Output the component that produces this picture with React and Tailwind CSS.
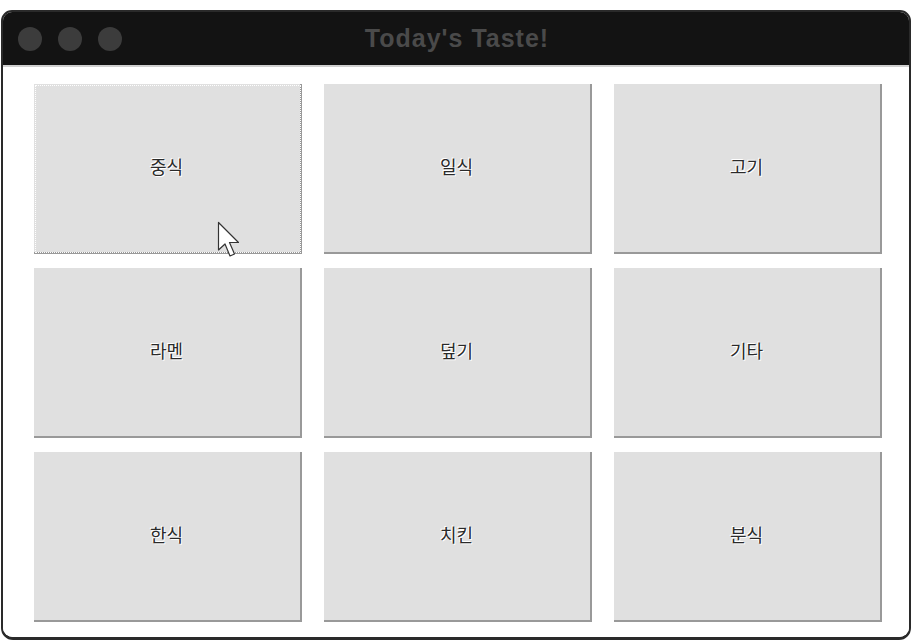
import React from "react"

const foods = ["중식", "일식", "고기", "라멘", "덮기", "기타", "한식", "치킨", "분식"]

function Cursor() {
  return (
    <svg className="absolute left-[183px] top-[137px] z-10" width="26" height="40" viewBox="0 0 26 40">
      <path d="M1.5 1.5 L1.5 29 L8 23 L13 35 L17.5 33 L12.5 21.5 L21.5 21.5 Z" fill="#fff" stroke="#333" strokeWidth="1.2" strokeLinejoin="round" />
    </svg>
  )
}

export default function App() {
  return (
    <div className="w-[912px] h-[640px] bg-white flex flex-col pt-[10px] font-['Liberation_Sans',sans-serif]">
      <div className="flex-1 mx-[1px] flex flex-col rounded-t-[11px] rounded-b-[12px] overflow-hidden border-2 border-[#2a2a2a] border-b-[3px]">
        {/* title bar */}
        <div className="relative h-[55px] bg-[#131313] border-b-2 border-[#d0d0d0] flex items-center">
          <div className="flex gap-[16px] pl-[15px]">
            <span className="w-[24px] h-[24px] rounded-full bg-[#3c3c3c]" />
            <span className="w-[24px] h-[24px] rounded-full bg-[#3c3c3c]" />
            <span className="w-[24px] h-[24px] rounded-full bg-[#3c3c3c]" />
          </div>
          <div className="absolute inset-0 flex items-center justify-center pl-[2px] text-[25px] tracking-[1px] font-bold text-[#4a4a4a]">
            Today's Taste!
          </div>
        </div>

        {/* grid */}
        <div className="flex-1 bg-white pl-[31px] pt-[17px]">
          <div className="grid grid-cols-[268px_268px_268px] grid-rows-[170px_170px_170px] gap-x-[22px] gap-y-[14px]">
            {foods.map((f, i) => (
              <button
                key={f}
                className={`relative bg-[#e0e0e0] border-r-2 border-b-2 border-[#999] flex items-center justify-center text-[18px] text-[#2a2a2a] font-['Noto_Sans_CJK_KR',sans-serif] [text-shadow:1px_1px_0_#fff,-1px_-1px_0_#fff] ${i === 0 ? "outline-1 outline-dotted outline-white -outline-offset-2" : ""}`}
              >
                <span className="-mt-[4px] pr-[1px]">{f}</span>
                {i === 0 && <Cursor />}
              </button>
            ))}
          </div>
        </div>
      </div>
    </div>
  )
}
